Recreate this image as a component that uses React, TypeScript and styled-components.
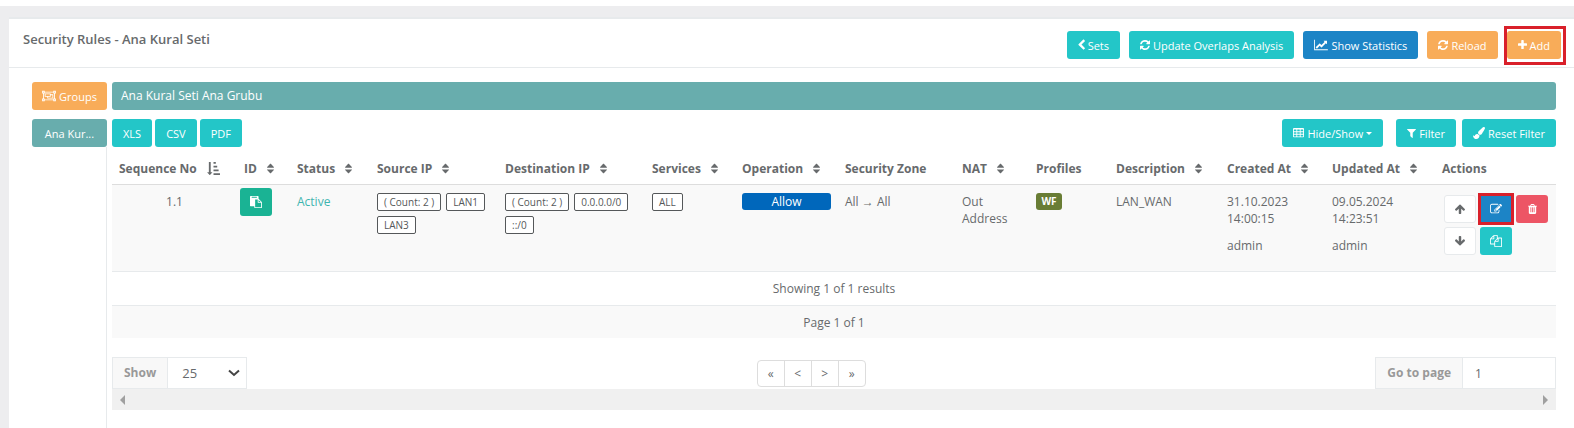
import React from "react";
import styled, { createGlobalStyle, css } from "styled-components";

const color = {
  text: "#676a6c",
  line: "#e7eaec",
  info: "#23c6c8",
  success: "#1c84c6",
  warning: "#f8ac59",
  primary: "#1ab394",
  danger: "#ed5565",
  group: "#68adad",
  stripe: "#f9f9f9",
  mark: "#d9202a",
};

const GlobalStyle = createGlobalStyle`
  *, *::before, *::after { box-sizing: border-box; }
  body {
    margin: 0;
    background: #ededef;
    color: ${color.text};
    font-family: "Open Sans", "Liberation Sans", sans-serif;
    font-size: 12px;
    line-height: 17px;
  }
  button, input, select { font: inherit; color: inherit; margin: 0; }
`;

/* ---------- icons: 1792-unit high glyphs, [x offset, width, path] ---------- */

const cell = (w: number) => `h-${w}q-14 0-23 9t-9 23v192q0 14 9 23t23 9h${w}q14 0 23-9t9-23`;
const tableCell = (x: number, y: number) => `M${x} ${y}v-192q0-14-9-23t-23-9${cell(320)}z`;
const bar = (x: number, y: number, w: number) =>
  `M${x} ${y}v192q0 14-9 23t-23 9h-${w}q-14 0-23-9t-9-23v-192q0-14 9-23t23-9h${w}q14 0 23 9t9 23z`;
const slat = (x: number) => `M${x} 1376v-704q0-14-9-23t-23-9h-64q-14 0-23 9t-9 23v704q0 14 9 23t23 9h64q14 0 23-9t9-23z`;

const glyphs = {
  left: [346, 1100, "M1427 301l-531 531 531 531q19 19 19 45t-19 45l-166 166q-19 19-45 19t-45-19l-742-742q-19-19-19-45t19-45l742-742q19-19 45-19t45 19l166 166q19 19 19 45t-19 45z"],
  refresh: [128, 1536, "M1639 1056q0 5-1 7-64 268-268 434.5t-478 166.5q-146 0-282.5-55t-243.5-157l-129 129q-19 19-45 19t-45-19-19-45v-448q0-26 19-45t45-19h448q26 0 45 19t19 45-19 45l-137 137q71 66 161 102t187 36q134 0 250-65t186-179q11-17 53-117 8-23 30-23h192q13 0 22.5 9.5t9.5 22.5zm25-800v448q0 26-19 45t-45 19h-448q-26 0-45-19t-19-45 19-45l138-138q-148-137-349-137-134 0-250 65t-186 179q-11 17-53 117-8 23-30 23h-199q-13 0-22.5-9.5t-9.5-22.5v-7q65-268 270-434.5t480-166.5q146 0 284 55.5t245 156.5l130-129q19-19 45-19t45 19 19 45z"],
  chart: [0, 2048, "M2048 1536v128h-2048v-1536h128v1408h1920zm-128-1248v435q0 21-19.5 29.5t-35.5-7.5l-121-121-633 633q-10 10-23 10t-23-10l-233-233-416 416-192-192 585-585q10-10 23-10t23 10l233 233 464-464-121-121q-16-16-7.5-35.5t29.5-19.5h435q14 0 23 9t9 23z"],
  plus: [192, 1408, "M1600 736v192q0 40-28 68t-68 28h-416v416q0 40-28 68t-68 28h-192q-40 0-68-28t-28-68v-416h-416q-40 0-68-28t-28-68v-192q0-40 28-68t68-28h416v-416q0-40 28-68t68-28h192q40 0 68 28t28 68v416h416q40 0 68 28t28 68z"],
  group: [0, 2048, "M2048 512h-128v768h128v384h-384v-128h-1280v128h-384v-384h128v-768h-128v-384h384v128h1280v-128h384v384zM1792 256v128h128v-128zM128 256v128h128v-128zM256 1536v-128h-128v128zM1664 1408v-128h128v-768h-128v-128h-1280v128h-128v768h128v128zM1920 1536v-128h-128v128zM1280 640h384v640h-896v-256h-384v-512h896zM512 896h640v-256h-640zM1536 1152v-384h-256v256h-384v128z"],
  table: [64, 1664, [576, 1088, 1600].flatMap((x) => [1376, 992, 608].map((y) => tableCell(x, y))).join("") + "M1728 288v1088q0 66-47 113t-113 47h-1344q-66 0-113-47t-47-113v-1088q0-66 47-113t113-47h1344q66 0 113 47t47 113z"],
  filter: [192, 1408, "M1595 295q17 41-14 70l-493 493v742q0 42-39 59-13 5-25 5-27 0-45-19l-256-256q-19-19-19-45v-486l-493-493q-31-29-14-70 17-39 59-39h1280q42 0 59 39z"],
  brush: [0, 1792, "M1615 0q70 0 122.5 46.5t52.5 116.5q0 63-45 151-332 629-465 752-97 91-218 91-126 0-216.5-92.5t-90.5-219.5q0-128 92-212l638-579q59-54 130-54zm-909 1034q39 76 106.5 130t150.5 76l1 71q4 213-129.5 347t-348.5 134q-123 0-218-46.5t-152.5-127.5-86.5-183-29-220q7 5 41 30t62 44.5 59 36.5 46 17q41 0 55-37 25-66 57.5-112.5t69.5-76 88-47.5 103-25.5 125-10.5z"],
  sort: [384, 1024, "M1408 1088q0 26-19 45l-448 448q-19 19-45 19t-45-19l-448-448q-19-19-19-45t19-45 45-19h896q26 0 45 19t19 45zm0-384q0 26-19 45t-45 19h-896q-26 0-45-19t-19-45 19-45l448-448q19-19 45-19t45 19l448 448q19 19 19 45z"],
  sortAsc: [0, 1792, "M736 1440q0 12-10 24l-319 319q-10 9-23 9-12 0-23-9l-320-320q-15-16-7-35 8-20 30-20h192v-1376q0-14 9-23t23-9h192q14 0 23 9t9 23v1376h192q14 0 23 9t9 23z" + bar(1792, 1568, 832) + bar(1600, 1056, 640) + bar(1408, 544, 448) + bar(1216, 32, 256)],
  paste: [0, 1792, "M768 1664h896v-640h-416q-40 0-68-28t-28-68v-416h-384v1152zm256-1440v-64q0-13-9.5-22.5t-22.5-9.5h-704q-13 0-22.5 9.5t-9.5 22.5v64q0 13 9.5 22.5t22.5 9.5h704q13 0 22.5-9.5t9.5-22.5zm256 672h299l-299-299v299zm512 128v672q0 40-28 68t-68 28h-960q-40 0-68-28t-28-68v-160h-544q-40 0-68-28t-28-68v-1344q0-40 28-68t68-28h1088q40 0 68 28t28 68v328q21 13 36 28l408 408q28 28 48 76t20 88z"],
  up: [117, 1558, "M1675 971q0 51-37 90l-75 75q-38 38-91 38-54 0-90-38l-294-293v704q0 52-37.5 84.5t-90.5 32.5h-128q-53 0-90.5-32.5t-37.5-84.5v-704l-294 293q-36 38-90 38t-90-38l-75-75q-38-38-38-90 0-53 38-91l651-651q35-37 90-37 54 0 91 37l651 651q37 39 37 91z"],
  down: [117, 1558, "M1675 832q0 53-37 90l-651 652q-39 37-91 37-53 0-90-37l-651-652q-38-36-38-90 0-53 38-91l74-75q39-37 91-37 53 0 90 37l294 294v-704q0-52 38-90t90-38h128q52 0 90 38t38 90v704l294-294q37-37 90-37 52 0 91 37l75 75q37 39 37 91z"],
  edit: [0, 1792, "M888 1184l116-116-152-152-116 116v56h96v96h56zm440-720q-16-16-33 1l-350 350q-17 17-1 33t33-1l350-350q17-17 1-33zm80 594v190q0 119-84.5 203.5t-203.5 84.5h-832q-119 0-203.5-84.5t-84.5-203.5v-832q0-119 84.5-203.5t203.5-84.5h832q63 0 117 25 15 7 18 23 3 17-9 29l-49 49q-14 14-32 8-23-6-45-6h-832q-66 0-113 47t-47 113v832q0 66 47 113t113 47h832q66 0 113-47t47-113v-126q0-13 9-22l64-64q15-15 35-7t20 29zm-96-738l288 288-672 672h-288v-288zm444 132l-92 92-288-288 92-92q28-28 68-28t68 28l152 152q28 28 28 68t-28 68z"],
  trash: [192, 1408, slat(704) + slat(960) + slat(1216) + "M672 384h448l-48-117q-7-9-17-11h-317q-10 2-17 11zm928 32v64q0 14-9 23t-23 9h-96v948q0 83-47 143.5t-113 60.5h-832q-66 0-113-58.5t-47-141.5v-952h-96q-14 0-23-9t-9-23v-64q0-14 9-23t23-9h309l70-167q15-37 54-63t79-26h320q40 0 79 26t54 63l70 167h309q14 0 23 9t9 23z"],
  copy: [0, 1792, "M1696 384q40 0 68 28t28 68v1216q0 40-28 68t-68 28h-960q-40 0-68-28t-28-68v-288h-544q-40 0-68-28t-28-68v-672q0-40 20-88t48-76l408-408q28-28 76-48t88-20h416q40 0 68 28t28 68v328q68-40 128-40h416zm-544 213l-299 299h299v-299zm-640-384l-299 299h299v-299zm196 647l316-316v-416h-384v416q0 40-28 68t-68 28h-416v640h512v-256q0-40 20-88t48-76zm956 804v-1152h-384v416q0 40-28 68t-68 28h-416v640h896z"],
} satisfies Record<string, [number, number, string]>;

type GlyphName = keyof typeof glyphs;

const Glyph = styled.svg`
  flex: none;
  fill: currentColor;
`;

function Icon({ name, size = 12 }: { name: GlyphName; size?: number }) {
  const [x, w, d] = glyphs[name];
  return (
    <Glyph aria-hidden="true" viewBox={`${x} 0 ${w} 1792`} height={size} width={Math.round(((size as number) * (w as number)) / 1792)}>
      <path fillRule="evenodd" d={d as string} />
    </Glyph>
  );
}

/* ---------- shared controls ---------- */

type Tone = "info" | "success" | "warning" | "primary" | "danger" | "group" | "plain";

const Button = styled.button<{ $tone: Tone; $square?: boolean }>`
  display: inline-flex;
  align-items: center;
  justify-content: center;
  gap: 3px;
  height: 28px;
  padding: 0 11px;
  border: 0;
  border-radius: 3px;
  background: ${(p) => (p.$tone === "plain" ? "#fff" : color[p.$tone])};
  color: #fff;
  font-size: 11px;
  white-space: nowrap;
  cursor: pointer;
  ${(p) => p.$tone === "plain" && css`border: 1px solid ${color.line}; color: ${color.text};`}
  ${(p) => p.$square && css`width: 32px; padding: 0;`}
`;

const Marked = styled.span<{ $inset: string }>`
  position: relative;
  display: inline-flex;
  &::after {
    content: "";
    position: absolute;
    inset: ${(p) => p.$inset};
    border: 3px solid ${color.mark};
    pointer-events: none;
  }
`;

const Caret = styled.span`
  border: 3px solid transparent;
  border-top-color: currentColor;
  border-bottom: 0;
`;

/* ---------- page frame ---------- */

const Page = styled.div`
  display: flex;
  flex-direction: column;
  min-height: 100vh;
`;

const TopStrip = styled.div`
  height: 6px;
  background: #fff;
`;

const Panel = styled.main`
  flex: 1;
  display: flex;
  flex-direction: column;
  margin: 11px 0 0 9px;
  border-top: 2px solid ${color.line};
  background: #fff;
`;

const PanelHeader = styled.header`
  display: flex;
  justify-content: space-between;
  padding: 12px 13px 8px 14px;
  border-bottom: 1px solid ${color.line};
`;

const Title = styled.h1`
  margin: 0;
  font-size: 13px;
  font-weight: 600;
  line-height: 17px;
`;

const HeaderActions = styled.div`
  display: flex;
  gap: 9px;
`;

const Body = styled.div`
  flex: 1;
  display: grid;
  grid-template-columns: 75px minmax(0, 1fr);
  gap: 5px;
  padding: 14px 18px 0 23px;
`;

const Sidebar = styled.nav`
  display: flex;
  flex-direction: column;
  gap: 9px;
  &::after {
    content: "";
    flex: 1;
    margin-top: -9px;
    border-right: 1px solid ${color.line};
  }
`;

const GroupBanner = styled.h2`
  margin: 0 0 9px;
  padding: 0 9px;
  border-radius: 3px;
  background: ${color.group};
  color: #fff;
  font-size: 12px;
  font-weight: 400;
  line-height: 28px;
`;

const Toolbar = styled.div`
  display: flex;
  justify-content: space-between;
  margin-bottom: 6px;
`;

const ToolGroup = styled.div<{ $gap: number }>`
  display: flex;
  gap: ${(p) => p.$gap}px;
`;

/* ---------- rules table ---------- */

const Table = styled.table`
  width: 100%;
  table-layout: fixed;
  border-collapse: separate;
  border-spacing: 0;
`;

const Th = styled.th`
  height: 32px;
  padding: 0 0 0 7px;
  border-bottom: 1px solid #ddd;
  font-weight: 700;
  text-align: left;
  white-space: nowrap;
`;

const ThLabel = styled.span`
  display: flex;
  align-items: center;
  gap: 10px;
`;

const Td = styled.td<{ $flush?: boolean; $center?: boolean }>`
  height: 86px;
  padding: ${(p) => (p.$flush ? "3px 0 0 3px" : "8px 7px")};
  background: ${color.stripe};
  vertical-align: top;
  text-align: ${(p) => (p.$center ? "center" : "left")};
`;

const SummaryTd = styled.td<{ $striped?: boolean }>`
  height: ${(p) => (p.$striped ? 33 : 34)}px;
  border-top: 1px solid ${color.line};
  background: ${(p) => (p.$striped ? color.stripe : "#fff")};
  text-align: center;
`;

const Tags = styled.div`
  display: flex;
  flex-wrap: wrap;
  gap: 5px;
`;

const Tag = styled.span`
  padding: 0 6px;
  border: 1px solid #55585a;
  border-radius: 2px;
  color: #55585a;
  background: #fff;
  font-size: 10px;
  font-weight: 500;
  line-height: 16px;
`;

const Operation = styled.div`
  border-radius: 3px;
  background: #0067bb;
  color: #fff;
  text-align: center;
`;

const Profile = styled.span`
  display: block;
  width: 26px;
  border-radius: 3px;
  background: #697d35;
  color: #fff;
  font-size: 10px;
  font-weight: 700;
  text-align: center;
`;

const Active = styled.span`
  color: #3fb5b0;
`;

const Arrow = styled.span`
  font-family: "Liberation Sans", sans-serif;
`;

const User = styled.p`
  margin: 10px 0 0;
`;

const RowActions = styled.div`
  display: grid;
  grid-template-columns: repeat(3, 32px);
  gap: 4px;
  padding: 2px 0 0 2px;
`;

/* ---------- pager ---------- */

const Footer = styled.div`
  display: flex;
  justify-content: space-between;
  align-items: center;
  margin-top: 19px;
`;

const Field = styled.label`
  display: flex;
  height: 32px;
`;

const FieldLabel = styled.span`
  padding: 0 11px;
  border: 1px solid ${color.line};
  border-right: 0;
  background: #f8f8f8;
  color: #999;
  font-weight: 700;
  line-height: 30px;
`;

const SelectWrap = styled.span`
  position: relative;
  display: flex;
  svg {
    position: absolute;
    right: 7px;
    top: 12px;
    pointer-events: none;
  }
`;

const Select = styled.select`
  width: 80px;
  padding: 0 14px;
  appearance: none;
  border: 1px solid ${color.line};
  border-radius: 0;
  background: #fff;
  font-size: 13px;
`;

const PageInput = styled.input`
  width: 94px;
  padding: 0 12px;
  border: 1px solid ${color.line};
  background: #fff;
`;

const Pager = styled.div`
  display: flex;
  border: 1px solid #ddd;
  border-radius: 4px;
`;

const PageButton = styled.button`
  width: 26px;
  height: 25px;
  padding: 0;
  border: 0;
  background: none;
  line-height: 23px;
  & + & {
    width: 27px;
    border-left: 1px solid #ddd;
  }
`;

const ScrollTrack = styled.div`
  display: flex;
  align-items: center;
  justify-content: space-between;
  height: 21px;
  padding: 0 8px;
  background: #f0f0f0;
`;

const ScrollArrow = styled.button<{ $dir: "left" | "right" }>`
  width: 5px;
  height: 10px;
  padding: 0;
  border: 5px solid transparent;
  border-${(p) => (p.$dir === "left" ? "right" : "left")}-color: #a0a0a0;
  border-${(p) => p.$dir}-width: 0;
  background: none;
`;

const columns: { label: string; width: number; icon?: GlyphName }[] = [
  { label: "Sequence No", width: 125, icon: "sortAsc" },
  { label: "ID", width: 53, icon: "sort" },
  { label: "Status", width: 80, icon: "sort" },
  { label: "Source IP", width: 128, icon: "sort" },
  { label: "Destination IP", width: 147, icon: "sort" },
  { label: "Services", width: 90, icon: "sort" },
  { label: "Operation", width: 103, icon: "sort" },
  { label: "Security Zone", width: 117 },
  { label: "NAT", width: 74, icon: "sort" },
  { label: "Profiles", width: 80 },
  { label: "Description", width: 111, icon: "sort" },
  { label: "Created At", width: 105, icon: "sort" },
  { label: "Updated At", width: 110, icon: "sort" },
  { label: "Actions", width: 121 },
];

function TagList({ items }: { items: string[] }) {
  return (
    <Tags>
      {items.map((t) => (
        <Tag key={t}>{t}</Tag>
      ))}
    </Tags>
  );
}

function RulesTable() {
  return (
    <Table>
      <colgroup>
        {columns.map((c) => (
          <col key={c.label} width={c.width} />
        ))}
      </colgroup>
      <thead>
        <tr>
          {columns.map((c) => (
            <Th key={c.label} scope="col">
              <ThLabel>
                {c.label}
                {c.icon && <Icon name={c.icon} size={13} />}
              </ThLabel>
            </Th>
          ))}
        </tr>
      </thead>
      <tbody>
        <tr>
          <Td $center>1.1</Td>
          <Td $flush>
            <Button $tone="primary" $square aria-label="Copy ID">
              <Icon name="paste" />
            </Button>
          </Td>
          <Td><Active>Active</Active></Td>
          <Td><TagList items={["( Count: 2 )", "LAN1", "LAN3"]} /></Td>
          <Td><TagList items={["( Count: 2 )", "0.0.0.0/0", "::/0"]} /></Td>
          <Td><TagList items={["ALL"]} /></Td>
          <Td><Operation>Allow</Operation></Td>
          <Td>All <Arrow>→</Arrow> All</Td>
          <Td>Out Address</Td>
          <Td><Profile>WF</Profile></Td>
          <Td>LAN_WAN</Td>
          <Td>31.10.2023<br />14:00:15<User>admin</User></Td>
          <Td>09.05.2024<br />14:23:51<User>admin</User></Td>
          <Td>
            <RowActions>
              <Button $tone="plain" $square aria-label="Move up"><Icon name="up" /></Button>
              <Marked $inset="-2px">
                <Button $tone="success" $square aria-label="Edit"><Icon name="edit" /></Button>
              </Marked>
              <Button $tone="danger" $square aria-label="Delete"><Icon name="trash" /></Button>
              <Button $tone="plain" $square aria-label="Move down"><Icon name="down" /></Button>
              <Button $tone="info" $square aria-label="Duplicate"><Icon name="copy" /></Button>
            </RowActions>
          </Td>
        </tr>
        <tr>
          <SummaryTd colSpan={columns.length}>Showing 1 of 1 results</SummaryTd>
        </tr>
        <tr>
          <SummaryTd $striped colSpan={columns.length}>Page 1 of 1</SummaryTd>
        </tr>
      </tbody>
    </Table>
  );
}

export default function App() {
  return (
    <Page>
      <GlobalStyle />
      <TopStrip />
      <Panel>
        <PanelHeader>
          <Title>Security Rules - Ana Kural Seti</Title>
          <HeaderActions>
            <Button $tone="info"><Icon name="left" />Sets</Button>
            <Button $tone="info"><Icon name="refresh" />Update Overlaps Analysis</Button>
            <Button $tone="success"><Icon name="chart" />Show Statistics</Button>
            <Button $tone="warning"><Icon name="refresh" />Reload</Button>
            <Marked $inset="-5px -5px -6px -3px">
              <Button $tone="warning"><Icon name="plus" />Add</Button>
            </Marked>
          </HeaderActions>
        </PanelHeader>
        <Body>
          <Sidebar>
            <Button $tone="warning"><Icon name="group" />Groups</Button>
            <Button $tone="group">Ana Kur...</Button>
          </Sidebar>
          <section>
            <GroupBanner>Ana Kural Seti Ana Grubu</GroupBanner>
            <Toolbar>
              <ToolGroup $gap={3}>
                <Button $tone="info">XLS</Button>
                <Button $tone="info">CSV</Button>
                <Button $tone="info">PDF</Button>
              </ToolGroup>
              <ToolGroup $gap={13}>
                <Button $tone="info"><Icon name="table" />Hide/Show<Caret /></Button>
                <ToolGroup $gap={6}>
                  <Button $tone="info"><Icon name="filter" />Filter</Button>
                  <Button $tone="info"><Icon name="brush" />Reset Filter</Button>
                </ToolGroup>
              </ToolGroup>
            </Toolbar>
            <RulesTable />
            <Footer>
              <Field>
                <FieldLabel>Show</FieldLabel>
                <SelectWrap>
                  <Select defaultValue="25">
                    <option>10</option>
                    <option>25</option>
                    <option>50</option>
                  </Select>
                  <svg width="12" height="8" viewBox="0 0 12 8" fill="none" stroke="#444" strokeWidth="2" aria-hidden="true">
                    <path d="M1 1.5l5 4.5 5-4.5" />
                  </svg>
                </SelectWrap>
              </Field>
              <Pager>
                <PageButton aria-label="First page">«</PageButton>
                <PageButton aria-label="Previous page">&lt;</PageButton>
                <PageButton aria-label="Next page">&gt;</PageButton>
                <PageButton aria-label="Last page">»</PageButton>
              </Pager>
              <Field>
                <FieldLabel>Go to page</FieldLabel>
                <PageInput defaultValue="1" />
              </Field>
            </Footer>
            <ScrollTrack>
              <ScrollArrow $dir="left" aria-label="Scroll left" />
              <ScrollArrow $dir="right" aria-label="Scroll right" />
            </ScrollTrack>
          </section>
        </Body>
      </Panel>
    </Page>
  );
}
